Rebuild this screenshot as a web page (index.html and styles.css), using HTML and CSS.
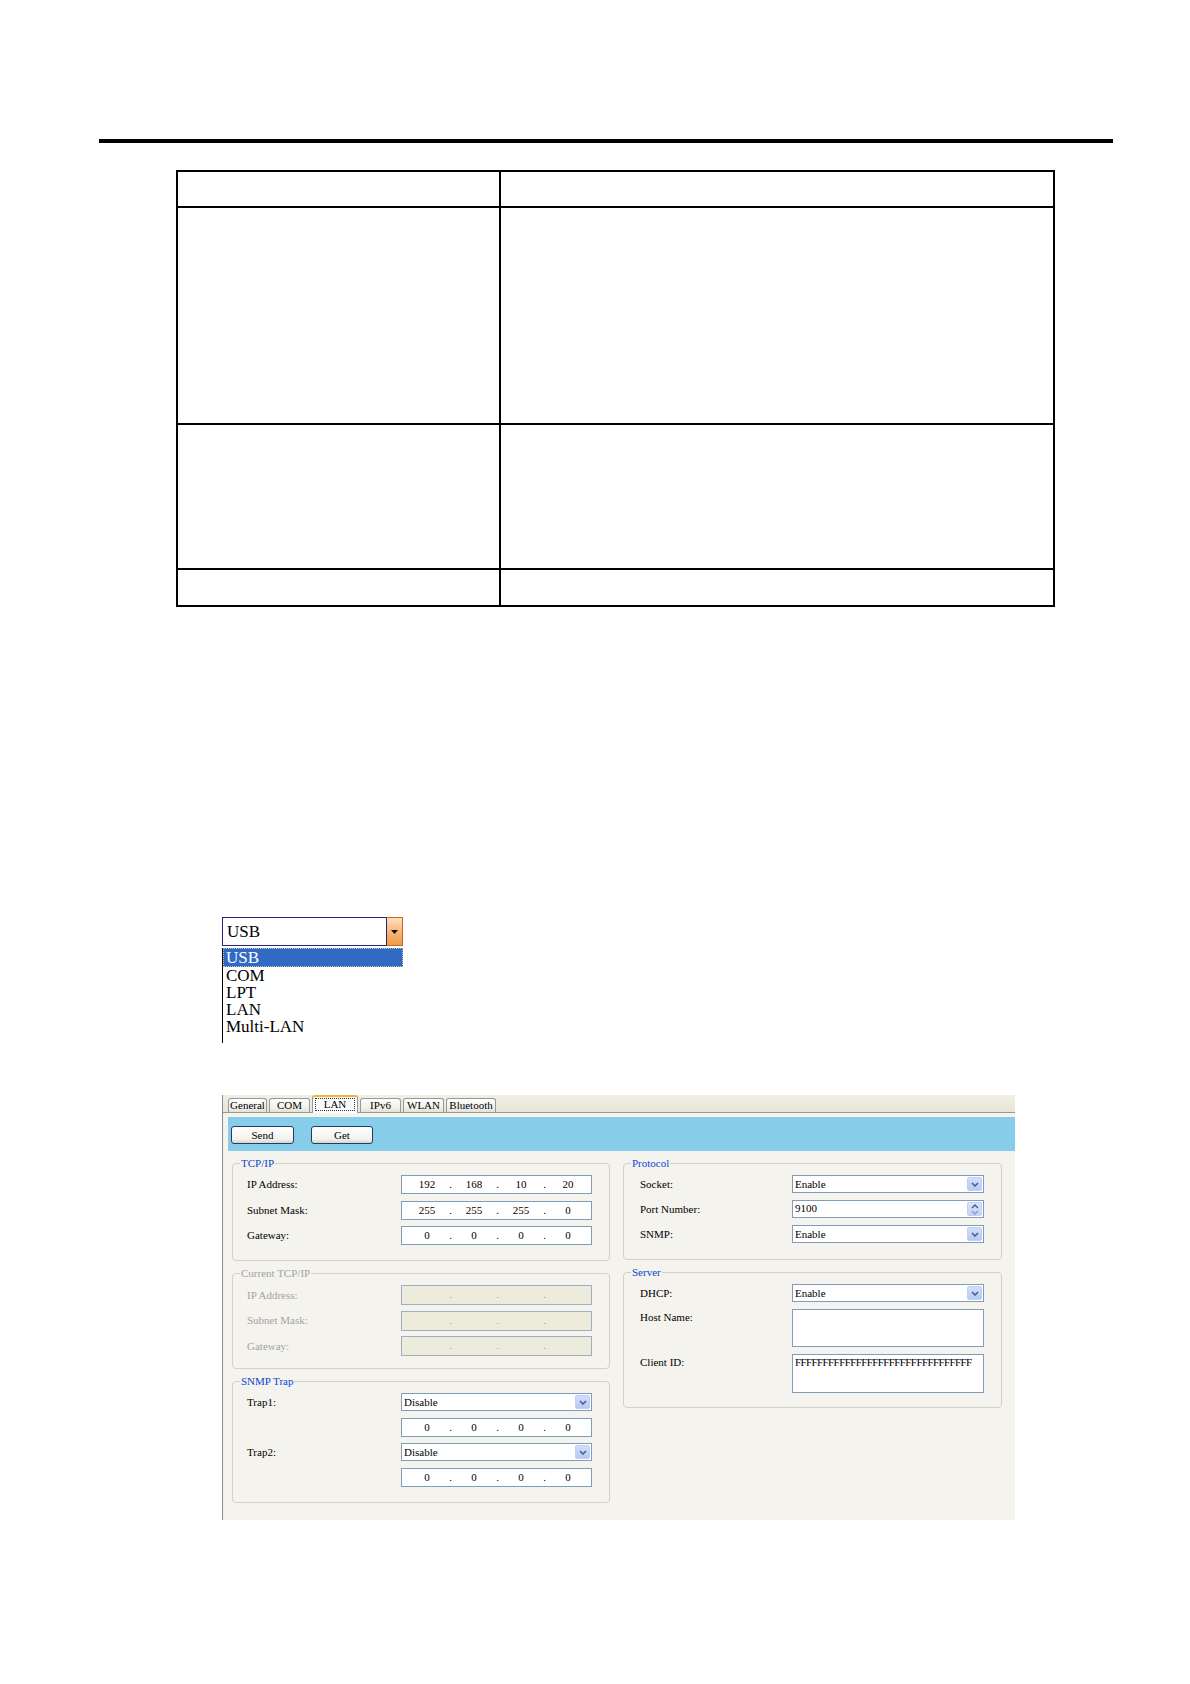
FILE: index.html
```html
<!DOCTYPE html>
<html>
<head>
<meta charset="utf-8">
<title>LAN settings</title>
<link rel="stylesheet" href="styles.css">
</head>
<body>
<div class="page">
  <div class="rule"></div>

  <div class="spec">
    <div class="cell c1 h1"></div><div class="cell c2 h1"></div>
    <div class="cell c1 h2"></div><div class="cell c2 h2"></div>
    <div class="cell c1 h3"></div><div class="cell c2 h3"></div>
    <div class="cell c1 h4"></div><div class="cell c2 h4"></div>
  </div>

  <div class="combo">
    <div class="combo-box">
      <span class="combo-value">USB</span>
      <span class="combo-btn"><svg width="7" height="4" viewBox="0 0 7 4"><path d="M0 0 H7 L3.5 4 Z" fill="#111"/></svg></span>
    </div>
    <ul class="combo-list">
      <li class="combo-item selected">USB</li>
      <li class="combo-item">COM</li>
      <li class="combo-item">LPT</li>
      <li class="combo-item">LAN</li>
      <li class="combo-item">Multi-LAN</li>
    </ul>
  </div>

  <div class="window">
    <div class="tabstrip">
      <span class="tab t-general">General</span>
      <span class="tab t-com">COM</span>
      <span class="tab t-lan active"><span class="focus">LAN</span></span>
      <span class="tab t-ipv6">IPv6</span>
      <span class="tab t-wlan">WLAN</span>
      <span class="tab t-bt">Bluetooth</span>
    </div>

    <div class="toolbar">
      <span class="btn btn-send">Send</span>
      <span class="btn btn-get">Get</span>
    </div>

    <div class="columns">
      <div class="col col-left">
        <fieldset class="group g-tcp">
          <legend>TCP/IP</legend>
          <div class="rows rows-ip">
            <span class="lbl">IP Address:</span>
            <div class="ip"><span>192</span><i>.</i><span>168</span><i>.</i><span>10</span><i>.</i><span>20</span></div>
            <span class="lbl">Subnet Mask:</span>
            <div class="ip"><span>255</span><i>.</i><span>255</span><i>.</i><span>255</span><i>.</i><span>0</span></div>
            <span class="lbl">Gateway:</span>
            <div class="ip"><span>0</span><i>.</i><span>0</span><i>.</i><span>0</span><i>.</i><span>0</span></div>
          </div>
        </fieldset>

        <fieldset class="group g-cur disabled">
          <legend>Current TCP/IP</legend>
          <div class="rows rows-cur">
            <span class="lbl">IP Address:</span>
            <div class="ip off"><span></span><i>.</i><span></span><i>.</i><span></span><i>.</i><span></span></div>
            <span class="lbl">Subnet Mask:</span>
            <div class="ip off"><span></span><i>.</i><span></span><i>.</i><span></span><i>.</i><span></span></div>
            <span class="lbl">Gateway:</span>
            <div class="ip off"><span></span><i>.</i><span></span><i>.</i><span></span><i>.</i><span></span></div>
          </div>
        </fieldset>

        <fieldset class="group g-trap">
          <legend>SNMP Trap</legend>
          <div class="rows rows-trap">
            <span class="lbl">Trap1:</span>
            <div class="select"><span class="sel-text">Disable</span><span class="arrow"><svg width="8" height="5" viewBox="0 0 8 5"><path d="M1 1 L4 4 L7 1" fill="none" stroke="#4a5f8a" stroke-width="1.6"/></svg></span></div>
            <span class="lbl"></span>
            <div class="ip"><span>0</span><i>.</i><span>0</span><i>.</i><span>0</span><i>.</i><span>0</span></div>
            <span class="lbl">Trap2:</span>
            <div class="select"><span class="sel-text">Disable</span><span class="arrow"><svg width="8" height="5" viewBox="0 0 8 5"><path d="M1 1 L4 4 L7 1" fill="none" stroke="#4a5f8a" stroke-width="1.6"/></svg></span></div>
            <span class="lbl"></span>
            <div class="ip"><span>0</span><i>.</i><span>0</span><i>.</i><span>0</span><i>.</i><span>0</span></div>
          </div>
        </fieldset>
      </div>

      <div class="col col-right">
        <fieldset class="group g-proto">
          <legend>Protocol</legend>
          <div class="rows rows-proto">
            <span class="lbl">Socket:</span>
            <div class="select"><span class="sel-text">Enable</span><span class="arrow"><svg width="8" height="5" viewBox="0 0 8 5"><path d="M1 1 L4 4 L7 1" fill="none" stroke="#4a5f8a" stroke-width="1.6"/></svg></span></div>
            <span class="lbl">Port Number:</span>
            <div class="select spin"><span class="sel-text">9100</span><span class="arrow spinner"><svg width="8" height="12" viewBox="0 0 8 12"><path d="M1 5 L4 2 L7 5" fill="none" stroke="#4a5f8a" stroke-width="1.5"/><path d="M1 8 L4 11 L7 8" fill="none" stroke="#8ea0c4" stroke-width="1.5"/></svg></span></div>
            <span class="lbl">SNMP:</span>
            <div class="select"><span class="sel-text">Enable</span><span class="arrow"><svg width="8" height="5" viewBox="0 0 8 5"><path d="M1 1 L4 4 L7 1" fill="none" stroke="#4a5f8a" stroke-width="1.6"/></svg></span></div>
          </div>
        </fieldset>

        <fieldset class="group g-server">
          <legend>Server</legend>
          <div class="rows rows-server">
            <span class="lbl">DHCP:</span>
            <div class="select"><span class="sel-text">Enable</span><span class="arrow"><svg width="8" height="5" viewBox="0 0 8 5"><path d="M1 1 L4 4 L7 1" fill="none" stroke="#4a5f8a" stroke-width="1.6"/></svg></span></div>
            <span class="lbl top">Host Name:</span>
            <div class="textbox"></div>
            <span class="lbl top">Client ID:</span>
            <div class="textbox"><span class="client">FFFFFFFFFFFFFFFFFFFFFFFFFFFFFFFF</span></div>
          </div>
        </fieldset>
      </div>
    </div>
  </div>
</div>
</body>
</html>
```

FILE: styles.css
```css
* { box-sizing: border-box; }

html, body {
  margin: 0;
  padding: 0;
  background: #fff;
}

body {
  width: 1190px;
  min-height: 1684px;
  font-family: "Liberation Serif", "Times New Roman", serif;
  color: #000;
}

.page {
  padding-top: 139px;
}

.rule {
  margin-left: 99px;
  width: 1014px;
  height: 4px;
  background: #000;
}

/* ---------- spec table ---------- */
.spec {
  margin-top: 27px;
  margin-left: 176px;
  width: 879px;
  display: grid;
  grid-template-columns: 323px 554px;
  grid-template-rows: 36px 217px 145px 37px;
  border-top: 2px solid #000;
  border-left: 2px solid #000;
}

.cell {
  border-right: 2px solid #000;
  border-bottom: 2px solid #000;
}

/* ---------- combo ---------- */
.combo {
  margin-top: 310px;
  margin-left: 222px;
  width: 181px;
}

.combo-box {
  display: flex;
  height: 29px;
}

.combo-value {
  flex: 1;
  border: 1px solid #23237a;
  border-right: none;
  font-size: 17px;
  line-height: 27px;
  padding-left: 4px;
  background: #fff;
}

.combo-btn {
  width: 17px;
  border: 1px solid #c26a1e;
  border-left: 1px solid #23237a;
  background: linear-gradient(#fde0bf, #f8b273 55%, #f29a48);
  display: flex;
  align-items: center;
  justify-content: center;
}

.combo-list {
  list-style: none;
  margin: 2px 0 0 0;
  padding: 0 0 8px 0;
  border-left: 1px solid #000;
}

.combo-item {
  font-size: 17px;
  line-height: 17px;
  height: 17px;
  padding-left: 3px;
  white-space: nowrap;
}

.combo-item.selected {
  height: 19px;
  background: #316ac5;
  color: #fff;
  border: 1px dotted #c8c8a0;
  padding-left: 2px;
}

/* ---------- window ---------- */
.window {
  margin-top: 52px;
  margin-left: 222px;
  width: 793px;
  height: 425px;
  background: #f4f3ee;
  border-left: 1px solid #8c8c8c;
  font-size: 11px;
}

.tabstrip {
  height: 18px;
  display: flex;
  align-items: flex-end;
  gap: 2px;
  padding-left: 5px;
  background: linear-gradient(#f1efe6, #e8e5d5);
  border-bottom: 1px solid #9a988c;
}

.tab {
  height: 14px;
  border: 1px solid #919b9c;
  border-bottom: none;
  border-radius: 3px 3px 0 0;
  background: linear-gradient(#ffffff, #f0efe9 70%, #e3e1d6);
  font-size: 11px;
  line-height: 12px;
  text-align: center;
  white-space: nowrap;
}

.t-general { width: 39px; }
.t-com { width: 41px; }
.t-lan { width: 46px; }
.t-ipv6 { width: 41px; }
.t-wlan { width: 41px; }
.t-bt { width: 50px; }

.tab.active {
  height: 18px;
  margin-bottom: -1px;
  background: #fcfcfe;
  border-top: 2px solid #f5b23c;
  padding-top: 1px;
}

.focus {
  display: inline-block;
  border: 1px dotted #333;
  padding: 0 2px;
  line-height: 11px;
  width: 40px;
  height: 13px;
}

.toolbar {
  margin: 4px 0 0 5px;
  height: 34px;
  background: #87cdea;
  display: flex;
  align-items: flex-start;
  gap: 17px;
  padding: 9px 0 0 3px;
}

.btn {
  height: 18px;
  border: 1px solid #1d3e6c;
  border-radius: 3px;
  background: linear-gradient(#ffffff, #f3f2ee 75%, #d9d5ca);
  font-size: 11px;
  line-height: 16px;
  text-align: center;
}

.btn-send { width: 63px; }
.btn-get { width: 62px; }

.columns {
  display: flex;
  gap: 13px;
  margin-top: 5px;
  padding-left: 9px;
}

.col {
  display: flex;
  flex-direction: column;
}

.col-left { width: 378px; }
.col-right { width: 379px; }

.group {
  margin: 0;
  min-width: 0;
  border: 1px solid #d3d1c3;
  border-radius: 4px;
  padding: 5px 17px 15px 14px;
}

.group legend {
  font-size: 11px;
  line-height: 14px;
  padding: 0 1px;
  margin-left: -7px;
  color: #0a46cf;
}

.col-right .group {
  padding-left: 16px;
}

.col-right .group legend {
  margin-left: -9px;
}

.g-cur { margin-top: 5px; padding-bottom: 12px; }
.g-trap { margin-top: 5px; padding-bottom: 15px; }
.g-proto { padding-bottom: 16px; }
.g-server { margin-top: 5px; padding-bottom: 14px; }

.disabled legend,
.disabled .lbl {
  color: #a3a3a3;
}

.rows {
  display: grid;
  grid-template-columns: 1fr 191px;
}

.col-right .rows {
  grid-template-columns: 1fr 192px;
}

.rows-ip { grid-auto-rows: 19px; row-gap: 6.5px; }
.rows-cur { grid-auto-rows: 20px; row-gap: 5.5px; }
.rows-trap { grid-template-rows: 18px 19px 18px 19px; row-gap: 6.7px; }
.rows-proto { grid-auto-rows: 18px; row-gap: 7px; }
.rows-server { grid-template-rows: 18px 38px 39px; row-gap: 7px; }

.lbl {
  align-self: center;
  font-size: 11px;
  line-height: 17px;
  white-space: nowrap;
}

.lbl.top {
  align-self: start;
}

/* IP field */
.ip {
  display: grid;
  grid-template-columns: 36px 11px 36px 11px 36px 11px 36px;
  padding-left: 7px;
  border: 1px solid #7f9db9;
  background: #fff;
  font-size: 11px;
  line-height: 17px;
  text-align: center;
}

.ip i {
  font-style: normal;
}

.ip.off {
  background: #ecebdc;
  border-color: #9eafc4;
  color: #a8a8a0;
}

/* select */
.select {
  display: flex;
  align-items: center;
  border: 1px solid #7f9db9;
  background: #fff;
  padding-left: 2px;
}

.sel-text {
  flex: 1;
  font-size: 11px;
  line-height: 14px;
  white-space: nowrap;
}

.arrow {
  width: 15px;
  height: 14px;
  margin-right: 1px;
  border: 1px solid #bcd0f8;
  border-radius: 2px;
  background: linear-gradient(#d3def9, #b7c9f4);
  display: flex;
  align-items: center;
  justify-content: center;
}

.select.spin {
  align-items: flex-start;
}

.select.spin .sel-text {
  line-height: 13px;
  padding-top: 1px;
}

.spinner {
  height: 14px;
  margin-top: 1px;
  background: linear-gradient(#dbe4fa, #c3d2f6);
}

.textbox {
  border: 1px solid #7f9db9;
  background: #fff;
  padding: 1px 2px;
}

.client {
  display: block;
  font-size: 11px;
  line-height: 13px;
  letter-spacing: -0.6px;
  white-space: nowrap;
  overflow: hidden;
}
```
